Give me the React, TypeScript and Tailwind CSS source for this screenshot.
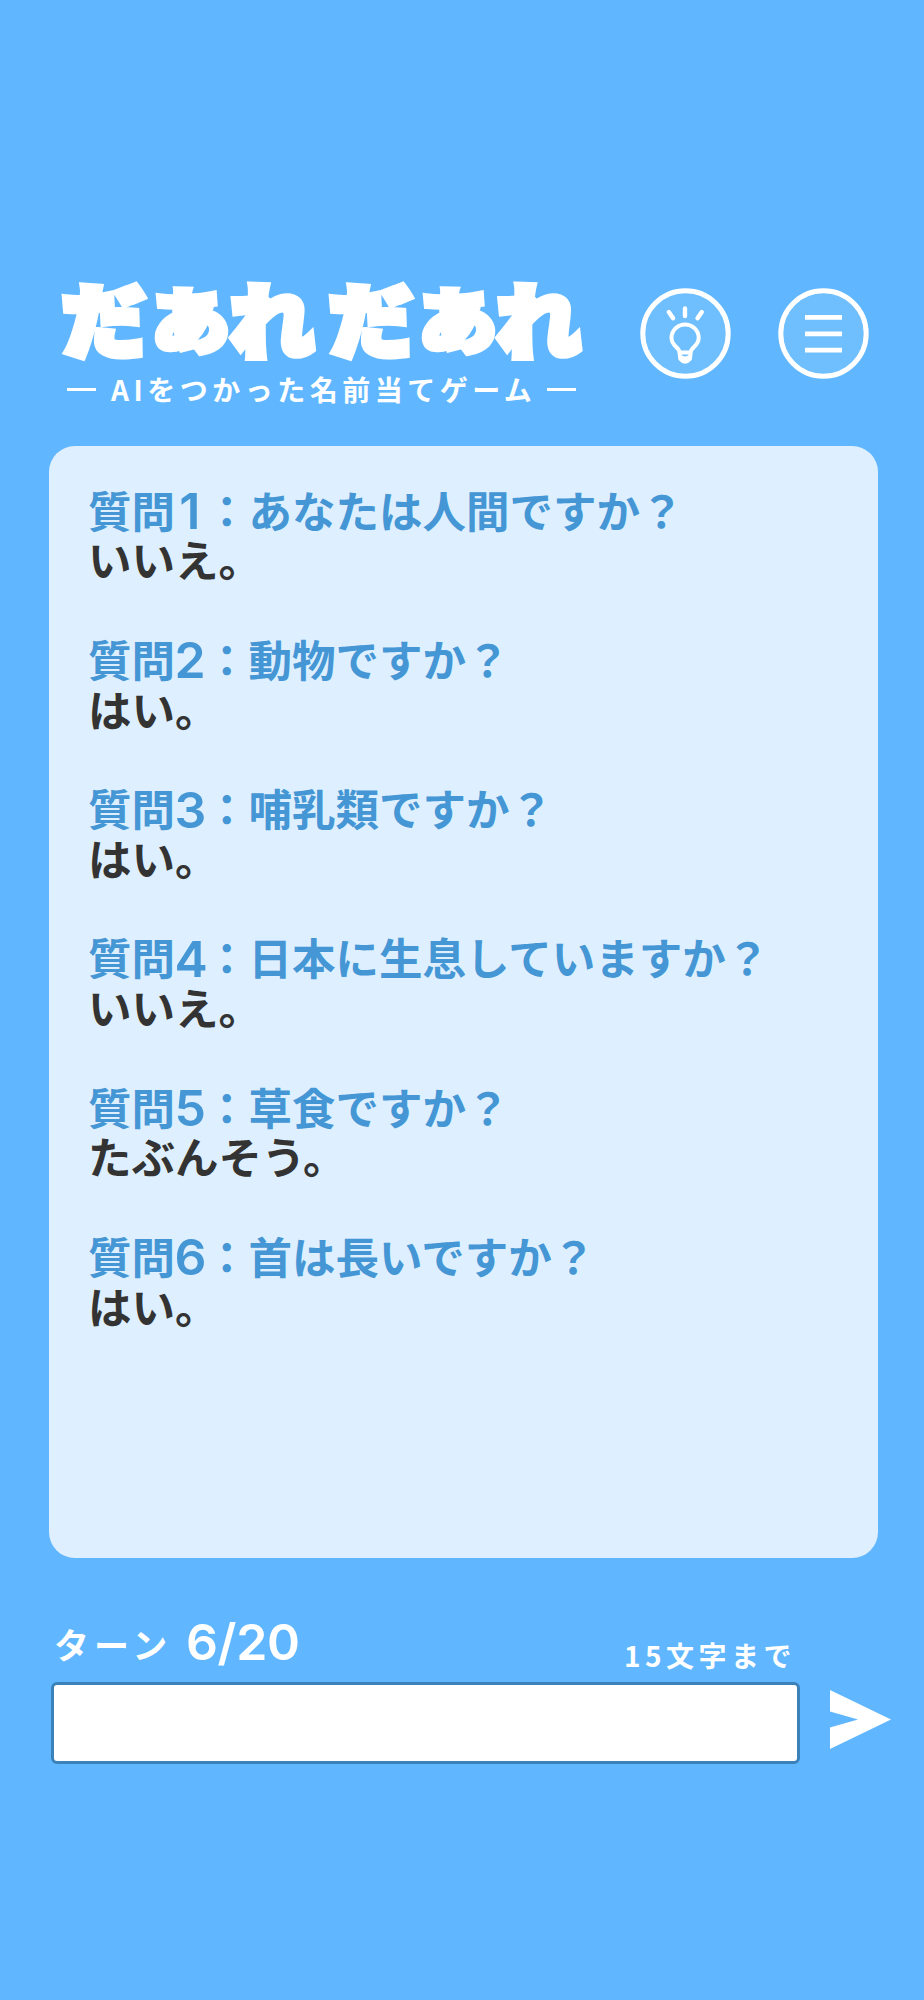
const items = [
  { q: "あなたは人間ですか？", a: "いいえ。" },
  { q: "動物ですか？", a: "はい。" },
  { q: "哺乳類ですか？", a: "はい。" },
  { q: "日本に生息していますか？", a: "いいえ。" },
  { q: "草食ですか？", a: "たぶんそう。" },
  { q: "首は長いですか？", a: "はい。" },
];

function TitleWord() {
  return (
    <span className="flex h-[88px] w-[266.5px] items-center text-[84px] leading-[88px] font-black [-webkit-text-stroke:8px_white] [paint-order:stroke_fill]">
      <span className="w-[84px] origin-center translate-x-[1px] -translate-y-[3px] scale-y-[0.95] skew-x-3">だ</span>
      <span className="w-[84px] origin-center translate-x-[2px] -translate-y-[9px] scale-x-[1.12] scale-y-[1.02] skew-x-3 [-webkit-text-stroke:5.5px_white]">ぁ</span>
      <span className="w-[84px] origin-center translate-x-[1px] -translate-y-[3px] scale-y-[0.96]">れ</span>
    </span>
  );
}

function BulbIcon() {
  return (
    <svg className="size-[91px]" viewBox="0 0 91 91" fill="none" stroke="white" strokeLinecap="round" strokeLinejoin="round">
      <circle cx="45.5" cy="45.5" r="42.7" fill="#6fbfff" strokeWidth="5" />
      <path d="M28.8 24l4.3 6.3M45 20.5v7.5M61.8 24l-4.3 6.3" strokeWidth="4.4" />
      <path d="M39.5 64.5C39.5 59 31.5 58.5 31.5 49.8A13.6 13.4 0 0 1 58.7 49.8C58.7 58.5 50.7 59 50.7 64.5ZM39.5 64.5l.8 6.5q4.8 5.5 9.6 0l.8-6.5M42 69.5q3.1 2 6.2 0" strokeWidth="4" />
    </svg>
  );
}

function MenuIcon() {
  return (
    <svg className="size-[91px]" viewBox="0 0 91 91" fill="none" stroke="white">
      <circle cx="45.5" cy="45.5" r="42.7" fill="#6fbfff" strokeWidth="5" />
      <path d="M27 29.3h37M27 45.8h37M27 62.2h37" strokeWidth="4.7" />
    </svg>
  );
}

export default function App() {
  return (
    <main className="flex h-[2000px] w-[924px] flex-col overflow-hidden bg-[#60b7ff] pt-[276px] font-['Noto_Sans_CJK_JP',sans-serif] text-white">
      <header className="flex h-[170px] pl-[61px]">
        <div className="w-[578.5px] shrink-0">
          <h1 className="flex">
            <TitleWord />
            <TitleWord />
          </h1>
          <p className="flex h-[50px] items-center pl-[6px] text-[28px] leading-[50px] font-bold whitespace-nowrap">
            <span className="h-[3px] w-[29px] bg-white" />
            <span className="ml-[15px] w-[440px] tracking-[4.5px]">AIをつかった名前当てゲーム</span>
            <span className="-ml-[4px] h-[3px] w-[29px] bg-white" />
          </p>
        </div>
        <button aria-label="ヒント" className="mt-[12px] h-[91px] shrink-0"><BulbIcon /></button>
        <button aria-label="メニュー" className="mt-[12px] ml-[47px] h-[91px] shrink-0"><MenuIcon /></button>
      </header>

      <section className="ml-[49px] h-[1111.5px] w-[828.5px] shrink-0 rounded-[26px] bg-[#def0ff] pt-[38.5px] pl-[39px] text-[43.5px] leading-[49.77px] font-bold whitespace-nowrap">
        {items.map((item, i) => (
          <div key={i} className="h-[149.3px]">
            <p className="flex h-[49.77px] text-[#4596d5]">
              <span>質問</span>
              <span className="mt-[2.5px] -ml-[0.5px] w-[30.5px] text-center font-[Inter] text-[50px] font-semibold">{i + 1}</span>
              <span>：{item.q}</span>
            </p>
            <p className="h-[49.77px] text-[#333]">{item.a}</p>
          </div>
        ))}
      </section>

      <div className="mt-[54.5px] ml-[51px] flex h-[70px] w-[748px] items-center justify-between font-bold whitespace-nowrap">
        <div className="-mt-[10px] flex items-center">
          <span className="mt-[5px] w-[135px] pl-[3px] text-[35px] tracking-[5px]">ターン</span>
          <span className="font-[Inter] text-[50px] font-semibold tracking-[-0.4px]">6/20</span>
        </div>
        <span className="mt-[15px] mr-[3px] text-[28px] tracking-[4.5px]">15文字まで</span>
      </div>

      <div className="flex items-center">
        <input aria-label="質問" className="ml-[51px] h-[82px] w-[748.5px] rounded-[6px] border-3 border-[#3c82ba] bg-white px-4 text-[36px] text-[#333] outline-none" />
        <button aria-label="送信" className="-mt-[7px] ml-[30.5px]">
          <svg className="h-[59px] w-[61px]" viewBox="0 0 61 59" fill="white">
            <path d="M0 0L61 29.5L0 59V37.5L28 29.5L0 21.5Z" />
          </svg>
        </button>
      </div>
    </main>
  );
}
